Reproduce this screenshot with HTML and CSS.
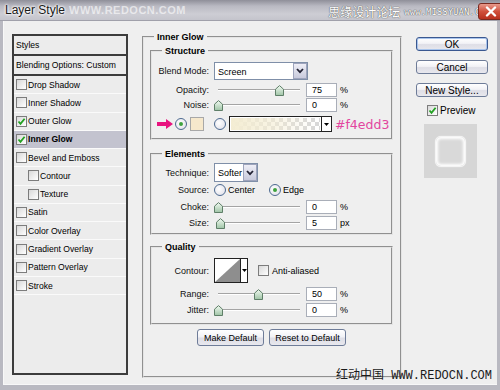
FILE: index.html
```html
<!DOCTYPE html>
<html>
<head>
<meta charset="utf-8">
<link rel="stylesheet" href="styles.css">
</head>
<body>
<div class="window">
  <div class="titlebar">
    <span class="title">Layer Style</span>
    <span class="wm1">WWW.REDOCN.COM</span>
    <span class="spacer"></span>
    <span class="wm2">思缘设计论坛</span>
    <span class="wm3">www.MISSYUAN.COM</span>
    <span class="close"><svg width="12" height="11" viewBox="0 0 12 11"><path d="M2 1.5 L10 9.5 M10 1.5 L2 9.5" stroke="#fff" stroke-width="2.4" stroke-linecap="round"/></svg></span>
  </div>
  <div class="client">
    <div class="stylelist">
      <div class="head">Styles</div>
      <div class="blend">Blending Options: Custom</div>
      <div class="item"><span class="cb"></span>Drop Shadow</div>
      <div class="item"><span class="cb"></span>Inner Shadow</div>
      <div class="item"><span class="cb on"><svg width="9" height="9" viewBox="0 0 9 9"><path d="M1.5 4.5 L3.5 6.8 L7.6 1.8" fill="none" stroke="#21a121" stroke-width="1.8"/></svg></span>Outer Glow</div>
      <div class="item sel"><span class="cb on"><svg width="9" height="9" viewBox="0 0 9 9"><path d="M1.5 4.5 L3.5 6.8 L7.6 1.8" fill="none" stroke="#21a121" stroke-width="1.8"/></svg></span>Inner Glow</div>
      <div class="item"><span class="cb"></span>Bevel and Emboss</div>
      <div class="item indent"><span class="cb"></span>Contour</div>
      <div class="item indent"><span class="cb"></span>Texture</div>
      <div class="item"><span class="cb"></span>Satin</div>
      <div class="item"><span class="cb"></span>Color Overlay</div>
      <div class="item"><span class="cb"></span>Gradient Overlay</div>
      <div class="item"><span class="cb"></span>Pattern Overlay</div>
      <div class="item"><span class="cb"></span>Stroke</div>
    </div>

    <fieldset class="grp outer">
      <legend class="lg-outer">Inner Glow</legend>

      <fieldset class="grp sub structure">
        <legend class="lg-sub">Structure</legend>
        <div class="row h18">
          <span class="lbl">Blend Mode:</span>
          <span class="select w94"><span class="val">Screen</span><span class="ddbtn"><svg width="8" height="6" viewBox="0 0 8 6"><path d="M1 1 L4 4.2 L7 1" fill="none" stroke="#223" stroke-width="1.8"/></svg></span></span>
        </div>
        <div class="row h14 mt3">
          <span class="lbl">Opacity:</span>
          <span class="slider"><span class="thumb" style="margin-left:61px"><svg width="9" height="11" viewBox="0 0 9 11"><defs><linearGradient id="tg1" x1="0" y1="0" x2="0" y2="1"><stop offset="0" stop-color="#f2fbf2"/><stop offset="1" stop-color="#9fc4a6"/></linearGradient></defs><path d="M0.5 4.2 L4.5 0.6 L8.5 4.2 L8.5 10.5 L0.5 10.5 Z" fill="url(#tg1)" stroke="#5f7f68"/></svg></span></span>
          <span class="num">75</span><span class="unit">%</span>
        </div>
        <div class="row h14 mt1">
          <span class="lbl">Noise:</span>
          <span class="slider"><span class="thumb" style="margin-left:0px"><svg width="9" height="11" viewBox="0 0 9 11"><path d="M0.5 4.2 L4.5 0.6 L8.5 4.2 L8.5 10.5 L0.5 10.5 Z" fill="url(#tg1)" stroke="#5f7f68"/></svg></span></span>
          <span class="num">0</span><span class="unit">%</span>
        </div>
        <div class="row h16 mt4">
          <span class="arrow"><svg width="16" height="10" viewBox="0 0 16 10"><path d="M0 3 L9 3 L9 0 L16 5 L9 10 L9 7 L0 7 Z" fill="#e8137f"/></svg></span>
          <span class="radio on r1"><span class="dot"></span></span>
          <span class="swatch"></span>
          <span class="radio r2"></span>
          <span class="grad"><span class="gfill"></span><span class="gdd"><svg width="5" height="3" viewBox="0 0 5 3"><path d="M0 0 L5 0 L2.5 3 Z" fill="#000"/></svg></span></span>
          <span class="hex">#f4edd3</span>
        </div>
      </fieldset>

      <fieldset class="grp sub elements">
        <legend class="lg-sub">Elements</legend>
        <div class="row h19">
          <span class="lbl">Technique:</span>
          <span class="select w44"><span class="val">Softer</span><span class="ddbtn"><svg width="8" height="6" viewBox="0 0 8 6"><path d="M1 1 L4 4.2 L7 1" fill="none" stroke="#223" stroke-width="1.8"/></svg></span></span>
        </div>
        <div class="row h12 mt2">
          <span class="lbl">Source:</span>
          <span class="radio"></span><span class="rtext">Center</span>
          <span class="radio on r3"><span class="dot"></span></span><span class="rtext">Edge</span>
        </div>
        <div class="row h14 mt4">
          <span class="lbl">Choke:</span>
          <span class="slider"><span class="thumb" style="margin-left:0px"><svg width="9" height="11" viewBox="0 0 9 11"><path d="M0.5 4.2 L4.5 0.6 L8.5 4.2 L8.5 10.5 L0.5 10.5 Z" fill="url(#tg1)" stroke="#5f7f68"/></svg></span></span>
          <span class="num">0</span><span class="unit">%</span>
        </div>
        <div class="row h14 mt2">
          <span class="lbl">Size:</span>
          <span class="slider"><span class="thumb" style="margin-left:2px"><svg width="9" height="11" viewBox="0 0 9 11"><path d="M0.5 4.2 L4.5 0.6 L8.5 4.2 L8.5 10.5 L0.5 10.5 Z" fill="url(#tg1)" stroke="#5f7f68"/></svg></span></span>
          <span class="num">5</span><span class="unit">px</span>
        </div>
      </fieldset>

      <fieldset class="grp sub quality">
        <legend class="lg-sub">Quality</legend>
        <div class="row h25">
          <span class="lbl">Contour:</span>
          <span class="contour"><span class="cpic"><svg width="25" height="23" viewBox="0 0 25 23" preserveAspectRatio="none"><path d="M0 23 L25 0 L25 23 Z" fill="#8e8e8e"/></svg></span><span class="cdd"><svg width="5" height="3" viewBox="0 0 5 3"><path d="M0 0 L5 0 L2.5 3 Z" fill="#000"/></svg></span></span>
          <span class="cb aa"></span><span class="aatext">Anti-aliased</span>
        </div>
        <div class="row h14 mt4">
          <span class="lbl">Range:</span>
          <span class="slider"><span class="thumb" style="margin-left:40px"><svg width="9" height="11" viewBox="0 0 9 11"><path d="M0.5 4.2 L4.5 0.6 L8.5 4.2 L8.5 10.5 L0.5 10.5 Z" fill="url(#tg1)" stroke="#5f7f68"/></svg></span></span>
          <span class="num">50</span><span class="unit">%</span>
        </div>
        <div class="row h14 mt2">
          <span class="lbl">Jitter:</span>
          <span class="slider"><span class="thumb" style="margin-left:0px"><svg width="9" height="11" viewBox="0 0 9 11"><path d="M0.5 4.2 L4.5 0.6 L8.5 4.2 L8.5 10.5 L0.5 10.5 Z" fill="url(#tg1)" stroke="#5f7f68"/></svg></span></span>
          <span class="num">0</span><span class="unit">%</span>
        </div>
      </fieldset>

      <div class="btnrow">
        <span class="btn w67">Make Default</span>
        <span class="btn w77">Reset to Default</span>
      </div>
    </fieldset>

    <div class="side">
      <span class="sbtn default">OK</span>
      <span class="sbtn">Cancel</span>
      <span class="sbtn">New Style...</span>
      <div class="prevrow"><span class="cb on"><svg width="9" height="9" viewBox="0 0 9 9"><path d="M1.5 4.5 L3.5 6.8 L7.6 1.8" fill="none" stroke="#21a121" stroke-width="1.8"/></svg></span><span class="ptext">Preview</span></div>
      <div class="preview"><span class="psq"></span></div>
    </div>
  </div>
  <div class="wm-bottom">红动中国 WWW.REDOCN.COM</div>
</div>
</body>
</html>
```
FILE: styles.css
```css
html, body {
  margin: 0;
  padding: 0;
}
body {
  font-family: "Liberation Sans", Arial, sans-serif;
  font-size: 9px;
  color: #000;
  background: #efefef;
}
.window {
  width: 500px;
  height: 390px;
  position: relative;
  display: flex;
  flex-direction: column;
  background: #efefef;
  overflow: hidden;
}

/* title bar */
.titlebar {
  height: 21px;
  flex: none;
  display: flex;
  align-items: center;
  box-sizing: border-box;
  padding-left: 5px;
  background: linear-gradient(#8f8f99, #b9b9c2 30%, #cdcdd4 70%, #c4c4cc);
  border-bottom: 1px solid #a0a0aa;
}
.title {
  font-size: 12px;
  color: #1a1a1a;
  text-shadow: 0 0 3px #fff, 0 0 3px #fff, 0 0 2px #fff;
}
.wm1 {
  margin-left: 4px;
  font-size: 11px;
  font-weight: bold;
  color: rgba(255, 255, 255, 0.6);
  letter-spacing: 0.5px;
}
.spacer {
  flex: 1;
}
.wm2 {
  font-family: "Noto Sans CJK SC", sans-serif;
  font-size: 12px;
  color: #fff;
  text-shadow: 0 0 1px #555, 0 0 1px #555;
  margin-top: 3px;
}
.wm3 {
  margin-left: 4px;
  margin-right: 9px;
  font-family: "DejaVu Sans Mono", monospace;
  font-size: 9px;
  color: #fff;
  text-shadow: 0 0 1px #444, 0 0 1px #444;
  margin-top: 4px;
}
.close {
  position: absolute;
  top: 3px;
  right: -8px;
  width: 30px;
  height: 17px;
  border-radius: 3px;
  border: 1px solid #7a2a20;
  background: linear-gradient(#e89a8c, #d0503c 50%, #b8301e);
  display: flex;
  align-items: center;
  justify-content: flex-start;
  padding-left: 6px;
  box-sizing: border-box;
}

/* client area */
.client {
  flex: 1;
  display: flex;
  align-items: flex-start;
  border-left: 3px solid #b9b9c1;
  border-right: 3px solid #b9b9c1;
  border-bottom: 5px solid #b9b9c1;
  padding-left: 9px;
  box-shadow: inset 1px -1px 0 #f8f8f8;
}

/* style list */
.stylelist {
  margin-top: 13px;
  width: 116px;
  height: 341px;
  box-sizing: border-box;
  border: 2px solid #3c3c3c;
  background: #ececec;
  display: flex;
  flex-direction: column;
  font-size: 8.6px;
}
.head, .blend {
  height: 18px;
  line-height: 18px;
  padding-left: 2px;
  border-bottom: 2px solid #3c3c3c;
  flex: none;
}
.item {
  height: 17.27px;
  border-bottom: 1px solid #fafafa;
  display: flex;
  align-items: center;
  padding-left: 2px;
  flex: none;
}
.item.indent {
  padding-left: 14px;
}
.item.sel {
  background: #c3c3cf;
  font-weight: bold;
}
.cb {
  width: 11px;
  height: 11px;
  box-sizing: border-box;
  border: 1px solid #7c7c7c;
  background: linear-gradient(135deg, #d8d8d8, #ffffff);
  margin-right: 1px;
  flex: none;
  display: flex;
  align-items: center;
  justify-content: center;
}

/* fieldsets */
.grp {
  margin: 0;
  padding: 0;
  min-width: 0;
  border: 2px groove #e4e4e4;
}
.grp legend {
  font-weight: bold;
  line-height: 12px;
  padding: 0 3px;
}
.outer {
  margin-top: 10px;
  margin-left: 14px;
  width: 260px;
  flex: none;
  box-sizing: border-box;
  padding: 0 7px 30px 6px;
}
.lg-outer {
  margin-left: 4px;
}
.lg-sub {
  margin-left: 10px;
}
.sub {
  padding: 5px 0 6px 0;
}
.structure {
  margin-top: 2px;
}
.elements {
  margin-top: 8px;
  padding: 3px 0 3px 0;
}
.quality {
  margin-top: 6px;
  padding: 5px 0 6px 0;
}

.row {
  display: flex;
  align-items: center;
}
.row > * {
  flex: none;
}
.h12 { height: 12px; }
.h14 { height: 14px; }
.h16 { height: 16px; }
.h18 { height: 18px; }
.h19 { height: 19px; }
.h25 { height: 25px; }
.mt1 { margin-top: 1px; }
.mt2 { margin-top: 2px; }
.mt3 { margin-top: 3px; }
.mt4 { margin-top: 4px; }

.lbl {
  width: 57px;
  margin-right: 5px;
  text-align: right;
  color: #111;
}

.select {
  display: flex;
  height: 100%;
  box-sizing: border-box;
  border: 1px solid #7f8fa8;
  background: #fff;
}
.w94 { width: 94px; }
.w44 { width: 44px; }
.select .val {
  flex: 1;
  padding-left: 3px;
  display: flex;
  align-items: center;
  margin-top: 1px;
}
.ddbtn {
  width: 12px;
  background: linear-gradient(#eeeef6, #c8cadc);
  border: 1px solid #9ea4bc;
  display: flex;
  align-items: center;
  justify-content: center;
}

.slider {
  width: 90px;
  height: 14px;
  display: flex;
  align-items: center;
  background:
    linear-gradient(#a4a4a4, #a4a4a4) no-repeat 4px 6px / 82px 1px,
    linear-gradient(#ffffff, #ffffff) no-repeat 4px 7px / 82px 1px;
}
.thumb {
  width: 9px;
  height: 11px;
  display: flex;
}
.num {
  width: 31px;
  height: 14px;
  box-sizing: border-box;
  border: 1px solid #a9aeb8;
  background: #fff;
  padding-left: 5px;
  margin-left: 2px;
  display: flex;
  align-items: center;
}
.unit {
  margin-left: 3px;
}

.arrow {
  margin-left: 5px;
  width: 16px;
  height: 10px;
  display: flex;
}
.radio {
  width: 12px;
  height: 12px;
  box-sizing: border-box;
  border-radius: 50%;
  border: 1px solid #4d6a90;
  background: radial-gradient(circle at 40% 40%, #ffffff, #dcdce6);
  display: flex;
  align-items: center;
  justify-content: center;
}
.radio .dot {
  width: 4px;
  height: 4px;
  border-radius: 50%;
  background: #3ea23e;
}
.r1 { margin-left: 2px; }
.r2 { margin-left: 10px; }
.r3 { margin-left: 14px; }
.swatch {
  margin-left: 3px;
  width: 14px;
  height: 14px;
  box-sizing: border-box;
  border: 1px solid #a8a8a8;
  background: #f6e8cc;
}
.grad {
  margin-left: 3px;
  width: 103px;
  height: 16px;
  box-sizing: border-box;
  border: 1px solid #222;
  display: flex;
}
.gfill {
  flex: 1;
  border: 1px solid #fff;
  background:
    linear-gradient(90deg, #f4edd3 0%, rgba(244, 237, 211, 0.6) 50%, rgba(244, 237, 211, 0) 95%),
    conic-gradient(#ffffff 25%, #d8d8d8 0 50%, #ffffff 0 75%, #d8d8d8 0) 0 0 / 8px 8px;
}
.gdd {
  width: 9px;
  border-left: 1px solid #222;
  background: #fff;
  display: flex;
  align-items: center;
  justify-content: center;
}
.hex {
  margin-left: 3px;
  font-family: "DejaVu Sans", sans-serif;
  font-size: 12.5px;
  color: #e2469e;
  white-space: nowrap;
}

.rtext {
  margin-left: 2px;
}

.contour {
  width: 34px;
  height: 25px;
  box-sizing: border-box;
  border: 1px solid #222;
  display: flex;
  background: #fff;
}
.cpic {
  width: 25px;
  display: flex;
}
.cdd {
  flex: 1;
  border-left: 1px solid #222;
  display: flex;
  align-items: center;
  justify-content: center;
}
.cb.aa {
  margin-left: 10px;
}
.aatext {
  margin-left: 2px;
}

.btnrow {
  margin-top: 4px;
  display: flex;
  justify-content: center;
  gap: 5px;
}
.btn, .sbtn {
  height: 17px;
  box-sizing: border-box;
  border: 1px solid #6e7c98;
  border-radius: 3px;
  background: linear-gradient(#ffffff, #f2f2f6 45%, #dedee6 55%, #e8e8ee);
  display: flex;
  align-items: center;
  justify-content: center;
  flex: none;
}
.w67 { width: 67px; }
.w77 { width: 77px; }

.side {
  margin-left: 14px;
  margin-top: 16px;
  width: 72px;
  flex: none;
  display: flex;
  flex-direction: column;
}
.sbtn {
  height: 14px;
  font-size: 10px;
  margin-bottom: 9px;
}
.sbtn.default {
  border-color: #3a5890;
  box-shadow: inset 0 0 0 1px #a8c4ec;
}
.prevrow {
  height: 11px;
  display: flex;
  align-items: center;
  padding-left: 11px;
  margin-top: -1px;
  font-size: 10px;
}
.ptext {
  margin-left: 1px;
}
.preview {
  margin-top: 8px;
  margin-left: 8px;
  width: 53px;
  height: 54px;
  background: #d6d6d6;
  display: flex;
  align-items: center;
  justify-content: center;
}
.psq {
  width: 29px;
  height: 29px;
  border-radius: 6px;
  background: #d9d9d9;
  border: 1px solid #f4f4f4;
  box-shadow: inset 0 0 3px 2px #ffffff, 0 0 1px #ffffff;
}

.wm-bottom {
  position: absolute;
  left: 336px;
  top: 365px;
  font-family: "Liberation Mono", "Noto Sans CJK SC", monospace;
  font-size: 12px;
  color: #1a1a1a;
  white-space: nowrap;
}
```
